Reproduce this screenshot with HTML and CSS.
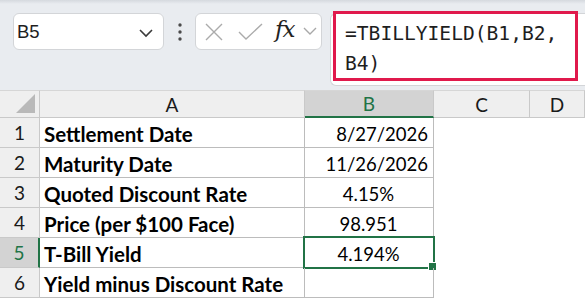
FILE: index.html
```html
<!DOCTYPE html>
<html lang="en">
<head>
    <meta charset="UTF-8">
    <title>TBILLYIELD</title>
    <link rel="stylesheet" href="styles.css">
</head>
<body>
    <div class="toolbar">
        <div class="name-box">
            <span class="name-text">B5</span>
            <svg class="chev" width="16" height="10" viewBox="0 0 16 10"><polyline points="1,2 7,8 13,2" fill="none" stroke="#3a3a3a" stroke-width="1.6"/></svg>
        </div>
        <svg class="dots" width="6" height="20" viewBox="0 0 6 20"><circle cx="3" cy="3" r="1.7" fill="#4a4a4a"/><circle cx="3" cy="10" r="1.7" fill="#4a4a4a"/><circle cx="3" cy="17" r="1.7" fill="#4a4a4a"/></svg>
        <div class="func-box">
            <svg width="18" height="18" viewBox="0 0 18 18"><path d="M1 1 L17 17 M17 1 L1 17" stroke="#ababab" stroke-width="1.4" fill="none"/></svg>
            <svg class="check" width="26" height="18" viewBox="0 0 26 18"><polyline points="1,9 8,16 24,1" fill="none" stroke="#ababab" stroke-width="1.4"/></svg>
            <span class="fx">fx</span>
            <svg width="14" height="9" viewBox="0 0 14 9"><polyline points="1,1 7,7 13,1" fill="none" stroke="#a8a8a8" stroke-width="1.4"/></svg>
        </div>
        <div class="formula-bar">
            <div class="formula-text">=TBILLYIELD(B1,B2,<br>B4)</div>
            <div class="highlight"></div>
        </div>
    </div>

    <div class="sheet">
        <div class="hd corner"><svg width="19" height="19" viewBox="0 0 19 19"><polygon points="19,0 19,19 0,19" fill="#b9b9b9"/></svg></div>
        <div class="hd col">A</div>
        <div class="hd col active-col">B</div>
        <div class="hd col">C</div>
        <div class="hd col">D</div>

        <div class="hd row">1</div>
        <div class="cell label">Settlement Date</div>
        <div class="cell right">8/27/2026</div>
        <div class="blank"></div><div class="blank"></div>

        <div class="hd row">2</div>
        <div class="cell label">Maturity Date</div>
        <div class="cell right">11/26/2026</div>
        <div class="blank"></div><div class="blank"></div>

        <div class="hd row">3</div>
        <div class="cell label">Quoted Discount Rate</div>
        <div class="cell center">4.15%</div>
        <div class="blank"></div><div class="blank"></div>

        <div class="hd row">4</div>
        <div class="cell label">Price (per $100 Face)</div>
        <div class="cell center">98.951</div>
        <div class="blank"></div><div class="blank"></div>

        <div class="hd row active-row">5</div>
        <div class="cell label">T-Bill Yield</div>
        <div class="cell center selected">4.194%<span class="sel-box"></span><span class="handle"></span></div>
        <div class="blank"></div><div class="blank"></div>

        <div class="hd row">6</div>
        <div class="cell label">Yield minus Discount Rate</div>
        <div class="cell center"></div>
        <div class="blank"></div><div class="blank"></div>
    </div>
</body>
</html>
```

FILE: styles.css
```css
body {
    margin: 0;
    background: #ffffff;
    font-family: Lato, "Liberation Sans", sans-serif;
    overflow: hidden;
}

.toolbar {
    height: 90px;
    box-sizing: border-box;
    background: linear-gradient(to bottom, #d5d9de 0px, #e9ecf0 4px, #e9ecf0 100%);
    display: flex;
    align-items: flex-start;
    padding: 13px 0 0 13px;
}

.name-box {
    width: 151px;
    height: 37px;
    box-sizing: border-box;
    background: #fff;
    border: 1px solid #d3d5d8;
    border-radius: 6px;
    display: flex;
    align-items: center;
    justify-content: space-between;
    padding: 0 8px 0 3px;
}

.name-text {
    font-family: "Liberation Sans", Arial, sans-serif;
    font-size: 18.5px;
    color: #1e1e1e;
}

.chev {
    margin-top: 2px;
}

.dots {
    margin: 9px 0 0 13px;
}

.func-box {
    margin-left: 12px;
    width: 127px;
    height: 37px;
    box-sizing: border-box;
    background: #fff;
    border: 1px solid #d3d5d8;
    border-radius: 6px;
    display: flex;
    align-items: center;
    padding: 0 0 0 9px;
}

.check {
    margin-left: 15px;
}

.fx {
    font-family: "DejaVu Serif", "Liberation Serif", serif;
    font-style: italic;
    font-size: 23px;
    color: #222;
    margin: -5px 9px 0 11px;
    letter-spacing: -1px;
}

.formula-bar {
    position: relative;
    margin-left: 8px;
    flex: 1;
    height: 71px;
    background: #fff;
    border: 1px solid #d3d5d8;
    border-right: none;
    border-radius: 6px 0 0 6px;
}

.formula-text {
    font-family: "DejaVu Sans Mono", "Liberation Mono", monospace;
    font-size: 19.6px;
    line-height: 30px;
    color: #1e1e1e;
    padding: 5px 0 0 14px;
}

.highlight {
    position: absolute;
    left: 2px;
    top: -3px;
    width: 239px;
    height: 64px;
    border: 3px solid #e0194c;
}

.sheet {
    display: grid;
    grid-template-columns: 40px 265px 129px 96px 1fr;
    grid-template-rows: 28px repeat(6, 30px);
}

.hd {
    background: #efefef;
    color: #1a1a1a;
    font-size: 19px;
    display: flex;
    align-items: center;
    justify-content: center;
    box-sizing: border-box;
    border-right: 1px solid #c9c9c9;
    border-bottom: 1px solid #c9c9c9;
}

.col {
    border-top: 1px solid #d6d6d6;
}

.corner {
    border-top: 1px solid #d6d6d6;
    align-items: flex-end;
    justify-content: flex-end;
    padding: 0 4px 4px 0;
}

.active-col {
    background: #d3d3d3;
    color: #217346;
    border-bottom: 2px solid #217346;
}

.active-row {
    background: #d3d3d3;
    color: #217346;
    border-right: 2px solid #217346;
}

.cell {
    position: relative;
    box-sizing: border-box;
    border-right: 1px solid #bcbcbc;
    border-bottom: 1px solid #bcbcbc;
    font-size: 18.5px;
    color: #000;
    display: flex;
    align-items: center;
    padding: 2px 5px 0 4px;
    white-space: nowrap;
}

.label {
    font-weight: bold;
    font-size: 20.5px;
}

.right {
    justify-content: flex-end;
}

.center {
    justify-content: center;
}

.sel-box {
    position: absolute;
    left: -2px;
    top: -2px;
    right: -2px;
    bottom: -2px;
    border: 2px solid #217346;
}

.handle {
    position: absolute;
    right: -4px;
    bottom: -4px;
    width: 7px;
    height: 7px;
    background: #217346;
    border: 1px solid #fff;
}
```
